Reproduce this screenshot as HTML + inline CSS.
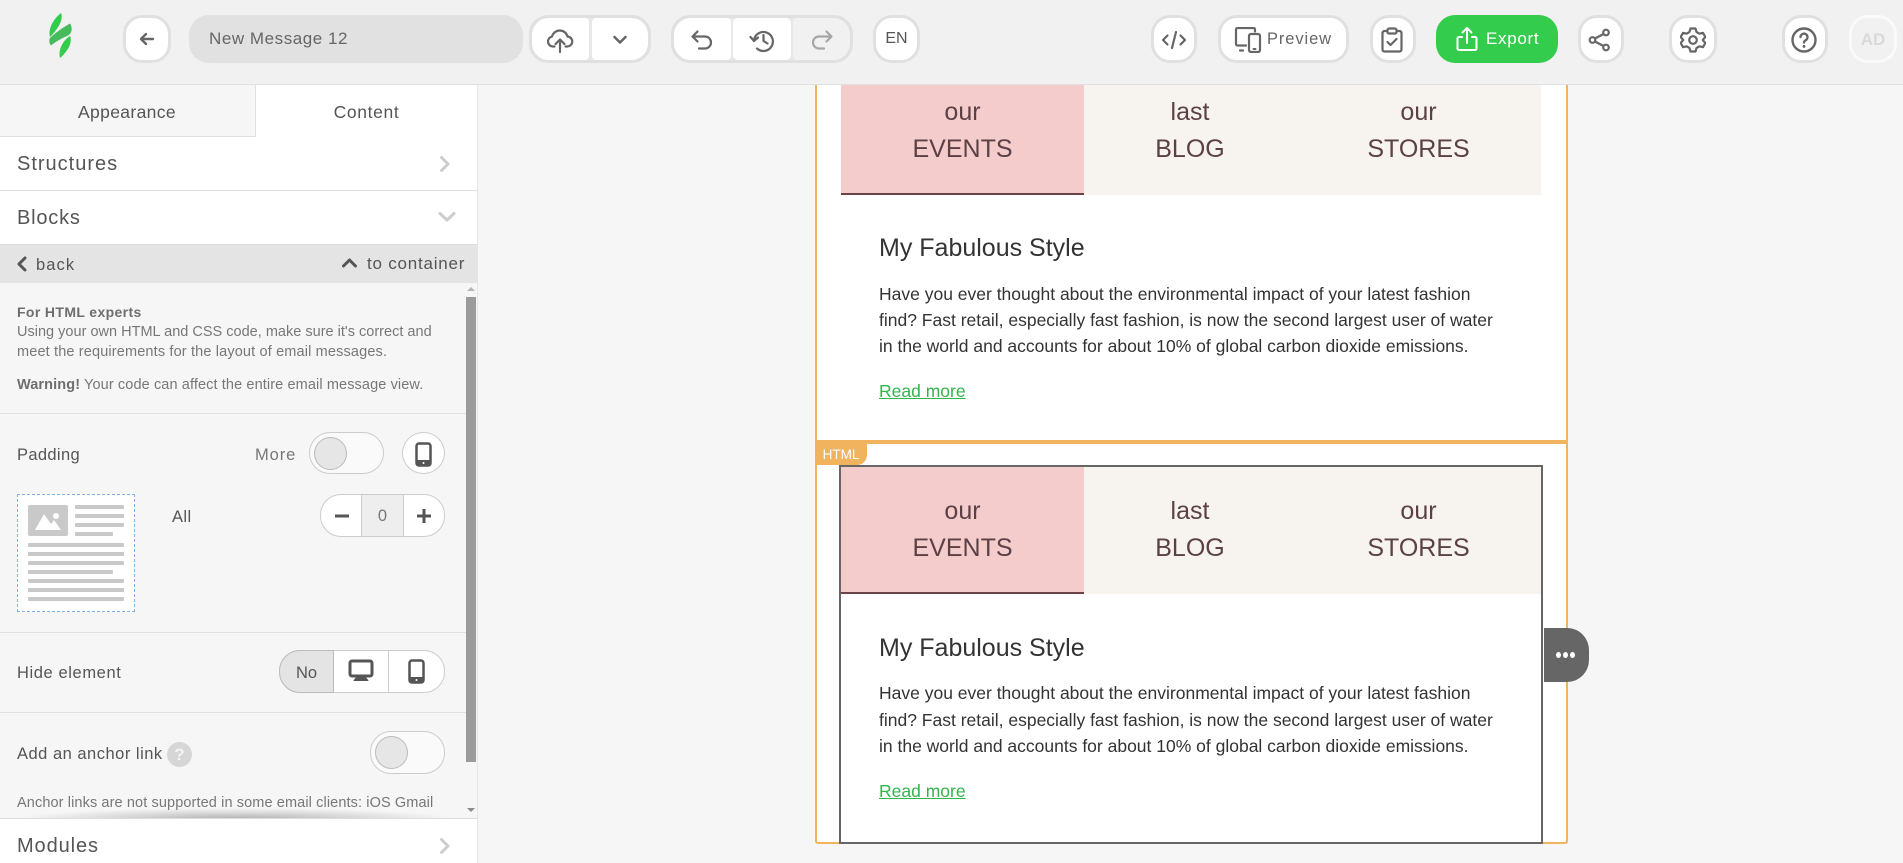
<!DOCTYPE html>
<html><head><meta charset="utf-8"><title>New Message 12</title>
<style>
html,body{margin:0;padding:0;width:1903px;height:863px;overflow:hidden;background:#f6f6f6;font-family:"Liberation Sans",sans-serif}
div,span,a,svg{position:absolute;box-sizing:border-box}
.t{white-space:nowrap;line-height:20px;height:20px;color:#555}
.c{text-align:center}
.btn{top:15px;height:48px;background:#fff;border:3px solid #e0e0e0;border-radius:19px}
.inner{top:18px;height:42px;background:#fff;border-radius:5px}
.hr{left:0;height:1px;background:#e0e0e0;width:466px}
svg{fill:none;stroke:#666;stroke-width:2;stroke-linecap:round;stroke-linejoin:round}
.ch{stroke:#ccc;stroke-width:3}
.m{color:#5b4045;font-size:25px;line-height:36px;height:36px;white-space:nowrap;text-align:center}
.h{color:#333;font-size:25px;line-height:30px;height:30px;left:879px;white-space:nowrap}
.b{color:#333;font-size:17.5px;line-height:26px;height:26px;left:879px;white-space:nowrap}
.r{color:#33b44f;font-size:17.5px;line-height:20px;height:20px;left:879px;text-decoration:underline;white-space:nowrap}
.ln{background:#c9c9c9;height:4px;border-radius:1px}
</style></head><body>

<!-- header -->
<div style="left:0;top:0;width:1903px;height:85px;background:#f1f1f1;border-bottom:1px solid #e0e0e0"></div>
<svg style="left:40px;top:5px;stroke:none" width="40" height="60" viewBox="0 0 40 60"><path style="stroke:none;fill:#33cc4d" d="M21 8C24 15 17 25 10 32C8 25 12 15 21 8Z"/><path style="stroke:none;fill:#45bb5c" d="M10 33C16 27 24 22 30 18.500C33 23 32 29 27 31C22 33 15 37 11 40.500C9 38 9 35 10 33Z"/><path style="stroke:none;fill:#33cc4d" d="M30 31C33 38 27 47 20 53C18 46 22 36 30 31Z"/></svg>

<div class="btn" style="left:123px;width:48px"></div>
<svg style="left:137px;top:29px" width="20" height="20" viewBox="0 0 20 20"><path d="M16 10H4M9 5l-5 5 5 5" style="stroke-width:2.400"/></svg>

<div style="left:189px;top:15px;width:334px;height:48px;background:#e1e1e1;border-radius:20px"></div>
<div class="t" style="left:209px;top:29px;font-size:17px;letter-spacing:.55px;color:#666">New Message 12</div>

<div class="btn" style="left:529px;width:122px;background:#e8e8e8"></div>
<div class="inner" style="left:532px;width:57px;border-radius:17px 4px 4px 17px"></div>
<div class="inner" style="left:592px;width:56px;border-radius:4px 17px 17px 4px"></div>
<svg style="left:546px;top:26px" width="28" height="28" viewBox="0 0 28 28"><path d="M8.500 20.500H7A5 5 0 0 1 6 10.600 8 8 0 0 1 21.500 10.500 5 5 0 0 1 21 20.500h-1.500M14 26V13.500M9.500 18l4.500-4.500 4.500 4.500" style="stroke-width:2.200"/></svg>
<svg style="left:612px;top:33px" width="16" height="14" viewBox="0 0 16 14"><path d="M2.500 4 8 9.500 13.500 4" style="stroke-width:2.500"/></svg>

<div class="btn" style="left:671px;width:182px;background:#e8e8e8"></div>
<div class="inner" style="left:674px;width:57px;border-radius:17px 4px 4px 17px"></div>
<div class="inner" style="left:733px;width:58px"></div>
<div class="inner" style="left:793px;width:57px;border-radius:4px 17px 17px 4px;background:#f1f1f1"></div>
<svg style="left:690px;top:29px" width="24" height="22" viewBox="0 0 24 22"><path d="M7.500 2.500 2.500 7.500 7.500 12.500M3 7.500H15A6 6 0 0 1 15 19.500H9" style="stroke-width:2.200"/></svg>
<svg style="left:749px;top:27px" width="26" height="26" viewBox="0 0 26 26"><path d="M5 13A9.500 9.500 0 1 1 8 21.500M1.500 10 5 14 9 10.500M14.500 8V14L18.500 16.500" style="stroke-width:2.200"/></svg>
<svg style="left:810px;top:29px;stroke:#a6a6a6" width="24" height="22" viewBox="0 0 24 22"><path d="M16.500 2.500 21.500 7.500 16.500 12.500M21 7.500H9A6 6 0 0 0 9 19.500H14" style="stroke:#a6a6a6;stroke-width:2.200"/></svg>

<div class="btn" style="left:873px;width:47px"></div>
<div class="t c" style="left:873px;top:29px;width:47px;font-size:16px;color:#555">EN</div>

<div class="btn" style="left:1151px;width:46px"></div>
<svg style="left:1161px;top:29px" width="26" height="22" viewBox="0 0 26 22"><path d="M6.500 6.500 2 11l4.500 4.500M19.500 6.500 24 11l-4.500 4.500M15 3 11 19" style="stroke-width:2.200"/></svg>

<div class="btn" style="left:1218px;width:131px"></div>
<svg style="left:1234px;top:27px" width="28" height="26" viewBox="0 0 28 26"><path d="M21 4.500V2.500A1.500 1.500 0 0 0 19.500 1H3.500A1.500 1.500 0 0 0 2 2.500V17A1.500 1.500 0 0 0 3.500 18.500H12M6 23.500H9" style="stroke-width:2.200"/><rect x="15" y="7" width="11" height="18" rx="2" style="position:static;stroke-width:2.200"/><path d="M19.500 22H21.500"/></svg>
<div class="t" style="left:1267px;top:29px;font-size:16.500px;color:#666;letter-spacing:.9px">Preview</div>

<div class="btn" style="left:1370px;width:46px"></div>
<svg style="left:1381px;top:27px" width="22" height="26" viewBox="0 0 22 26"><path d="M6.500 4H3.500A2 2 0 0 0 1.500 6V22.500A2 2 0 0 0 3.500 24.500H18.500A2 2 0 0 0 20.500 22.500V6A2 2 0 0 0 18.500 4H15.500M8 1.500H14A1.500 1.500 0 0 1 15.500 3V5A1.500 1.500 0 0 1 14 6.500H8A1.500 1.500 0 0 1 6.500 5V3A1.500 1.500 0 0 1 8 1.500ZM6.500 15 9.500 18 15.500 12" style="stroke-width:2.200"/></svg>

<div style="left:1436px;top:15px;width:122px;height:48px;background:#33cc4d;border-radius:19px"></div>
<svg style="left:1455px;top:26px" width="24" height="26" viewBox="0 0 24 26"><path style="stroke:#fff;stroke-width:2" d="M7 11H4A1.500 1.500 0 0 0 2.500 12.500V22.500A1.500 1.500 0 0 0 4 24H20A1.500 1.500 0 0 0 21.500 22.500V12.500A1.500 1.500 0 0 0 20 11H17M12 17V2M7.500 6.500 12 2 16.500 6.500"/></svg>
<div class="t" style="left:1486px;top:29px;font-size:17px;color:#fff;letter-spacing:.7px">Export</div>

<div class="btn" style="left:1578px;width:46px"></div>
<svg style="left:1588px;top:28px" width="24" height="24" viewBox="0 0 24 24"><circle cx="18" cy="4.500" r="2.800" style="position:static;stroke-width:2.200"/><circle cx="4.500" cy="12" r="2.800" style="position:static;stroke-width:2.200"/><circle cx="18" cy="19.500" r="2.800" style="position:static;stroke-width:2.200"/><path d="M7 10.500 15.500 6M7 13.500 15.500 18" style="stroke-width:2.200"/></svg>

<div class="btn" style="left:1669px;width:48px"></div>
<svg style="left:1680px;top:27px" width="26" height="26" viewBox="0 0 26 26"><path d="M10.500 1.500H15.500L16.500 5 19.500 6.700 23 5.800 25.300 10 22.800 13 25.300 16 23 20.200 19.500 19.300 16.500 21 15.500 24.500H10.500L9.500 21 6.500 19.300 3 20.200 .7 16 3.200 13 .7 10 3 5.800 6.500 6.700 9.500 5Z" style="stroke-width:2.200"/><circle cx="13" cy="13" r="3.800" style="position:static;stroke-width:2.200"/></svg>

<div class="btn" style="left:1782px;width:46px"></div>
<svg style="left:1791px;top:27px" width="26" height="26" viewBox="0 0 26 26"><circle cx="13" cy="13" r="11.500" style="position:static;stroke-width:2.400"/><path d="M9.500 10A3.500 3.500 0 1 1 14.500 13.300C13.500 14 13 14.500 13 15.500" style="stroke-width:2.400"/><path d="M13 19.300V19.500" style="stroke-width:2.800"/></svg>

<div class="btn" style="left:1849px;width:48px;border-color:#fafafa;background:#f1f1f1"></div>
<div class="t c" style="left:1849px;top:30px;width:48px;font-size:17px;font-weight:bold;color:#d9d9d9">AD</div>

<!-- sidebar -->
<div style="left:0;top:85px;width:478px;height:778px;background:#fff;border-right:1px solid #e6e6e6"></div>
<div style="left:0;top:85px;width:256px;height:52px;background:#f6f6f6;border-right:1px solid #e0e0e0;border-bottom:1px solid #e0e0e0"></div>
<div class="t c" style="left:0;top:102px;width:254px;font-size:17.500px;color:#555;letter-spacing:.36px">Appearance</div>
<div class="t c" style="left:256px;top:102px;width:221px;font-size:17.500px;color:#555;letter-spacing:.64px">Content</div>

<div class="t" style="left:17px;top:154px;font-size:20px;color:#555;letter-spacing:1px">Structures</div>
<svg class="ch" style="left:438px;top:155px" width="14" height="18" viewBox="0 0 14 18"><path d="M3.500 2.500 10 9l-6.500 6.500" style="stroke:#ccc;stroke-width:3"/></svg>
<div class="hr" style="top:190px;width:477px"></div>
<div class="t" style="left:17px;top:208px;font-size:20px;color:#555;letter-spacing:.8px">Blocks</div>
<svg style="left:437px;top:210px" width="20" height="14" viewBox="0 0 20 14"><path d="M3 3.500 10 10l7-6.500" style="stroke:#ccc;stroke-width:3"/></svg>

<div style="left:0;top:244px;width:477px;height:39px;background:#e4e4e4;border-top:1px solid #ddd"></div>
<svg style="left:16px;top:256px" width="12" height="16" viewBox="0 0 12 16"><path d="M9 2 3 8l6 6" style="stroke:#555;stroke-width:3"/></svg>
<div class="t" style="left:36px;top:255px;font-size:16.500px;letter-spacing:1.100px">back</div>
<svg style="left:341px;top:257px" width="17" height="12" viewBox="0 0 17 12"><path d="M2.500 9 8.500 3l6 6" style="stroke:#555;stroke-width:3"/></svg>
<div class="t" style="left:367px;top:254px;font-size:17px;letter-spacing:.78px">to container</div>

<div style="left:0;top:283px;width:477px;height:536px;background:#f6f6f6"></div>
<div style="left:466px;top:297px;width:10px;height:465px;background:#9b9b9b"></div>
<svg style="left:466px;top:286px;stroke:none" width="10" height="8"><path d="M5 1 9 5H1Z" style="fill:#b5b5b5;stroke:none"/></svg>
<svg style="left:466px;top:806px;stroke:none" width="10" height="8"><path d="M5 6 9 2H1Z" style="fill:#8a8a8a;stroke:none"/></svg>

<div class="t" style="left:17px;top:302px;font-size:14px;font-weight:bold;color:#6e6e6e;letter-spacing:.37px">For HTML experts</div>
<div class="t" style="left:17px;top:322px;font-size:14.500px;color:#777;letter-spacing:.01px">Using your own HTML and CSS code, make sure it's correct and</div>
<div class="t" style="left:17px;top:342px;font-size:14.500px;color:#777;letter-spacing:.15px">meet the requirements for the layout of email messages.</div>
<div class="t" style="left:17px;top:375px;font-size:14.500px;color:#777;letter-spacing:.11px"><b style="color:#6e6e6e">Warning!</b> Your code can affect the entire email message view.</div>
<div class="hr" style="top:413px"></div>

<div class="t" style="left:17px;top:445px;font-size:16.500px;letter-spacing:.35px">Padding</div>
<div class="t" style="left:255px;top:445px;font-size:16.500px;color:#777;letter-spacing:.9px">More</div>
<div style="left:309px;top:432px;width:75px;height:42px;border:1px solid #ccc;border-radius:21px;background:#fafafa"></div>
<div style="left:314px;top:437px;width:33px;height:33px;border:1px solid #bbb;border-radius:50%;background:#e6e6e6"></div>
<div style="left:402px;top:432px;width:43px;height:42px;border:1px solid #ccc;border-radius:50%;background:#fff"></div>
<svg style="left:415px;top:442px" width="17" height="25" viewBox="0 0 17 25"><rect x="1.500" y="1.500" width="14" height="22" rx="2.500" style="position:static;stroke:#555;stroke-width:2.500"/><path d="M1.500 19H15.500V21.500A2 2 0 0 1 13.500 23.500H3.500A2 2 0 0 1 1.500 21.500Z" style="fill:#555;stroke:#555"/><circle cx="8.500" cy="21" r="1" style="position:static;fill:#fff;stroke:none"/></svg>

<div style="left:17px;top:494px;width:118px;height:118px;background:#fff;border:1px dashed #7fb2e6"></div>
<div style="left:28px;top:505px;width:40px;height:31px;background:#c9c9c9;border-radius:2px"></div>
<svg style="left:28px;top:505px;stroke:none" width="40" height="31" viewBox="0 0 40 31"><path d="M7 25 16 9 23 19 26 15 33 25Z" style="fill:#fff;stroke:none"/><circle cx="28" cy="11" r="3" style="position:static;fill:#fff;stroke:none"/></svg>
<div class="ln" style="left:75px;top:505px;width:49px"></div>
<div class="ln" style="left:75px;top:514px;width:49px"></div>
<div class="ln" style="left:75px;top:523px;width:49px"></div>
<div class="ln" style="left:75px;top:532px;width:38px"></div>
<div class="ln" style="left:28px;top:543px;width:96px"></div>
<div class="ln" style="left:28px;top:552px;width:96px"></div>
<div class="ln" style="left:28px;top:561px;width:96px"></div>
<div class="ln" style="left:28px;top:570px;width:85px"></div>
<div class="ln" style="left:28px;top:579px;width:96px"></div>
<div class="ln" style="left:28px;top:588px;width:96px"></div>
<div class="ln" style="left:28px;top:597px;width:96px"></div>

<div class="t" style="left:172px;top:507px;font-size:16.500px;letter-spacing:.4px">All</div>
<div style="left:320px;top:494px;width:125px;height:43px;border:1px solid #ccc;border-radius:21px;background:#fff"></div>
<div style="left:361px;top:495px;width:43px;height:41px;background:#eee;border-left:1px solid #ccc;border-right:1px solid #ccc"></div>
<div class="t c" style="left:361px;top:506px;width:43px;font-size:16.500px;color:#777">0</div>
<svg style="left:332px;top:507px" width="20" height="18" viewBox="0 0 20 18"><path d="M3 9H17" style="stroke:#555;stroke-width:3;stroke-linecap:butt"/></svg>
<svg style="left:414px;top:506px" width="20" height="20" viewBox="0 0 20 20"><path d="M3 10H17M10 3V17" style="stroke:#555;stroke-width:3;stroke-linecap:butt"/></svg>
<div class="hr" style="top:632px"></div>

<div class="t" style="left:17px;top:663px;font-size:16.500px;letter-spacing:.6px">Hide element</div>
<div style="left:279px;top:650px;width:166px;height:43px;border:1px solid #ccc;border-radius:21px;background:#fff"></div>
<div style="left:279px;top:650px;width:55px;height:43px;border:1px solid #bbb;border-radius:21px 0 0 21px;background:#e4e4e4"></div>
<div style="left:388px;top:651px;width:1px;height:41px;background:#ccc"></div>
<div class="t c" style="left:279px;top:663px;width:55px;font-size:16.500px">No</div>
<svg style="left:348px;top:659px" width="26" height="24" viewBox="0 0 26 24"><rect x="2" y="2" width="22" height="15" rx="2" style="position:static;stroke:#555;stroke-width:3"/><path d="M8 19H18L20 21.500H6Z" style="fill:#555;stroke:#555;stroke-width:1"/></svg>
<svg style="left:408px;top:659px" width="17" height="25" viewBox="0 0 17 25"><rect x="1.500" y="1.500" width="14" height="22" rx="2.500" style="position:static;stroke:#555;stroke-width:2.500"/><path d="M1.500 19H15.500V21.500A2 2 0 0 1 13.500 23.500H3.500A2 2 0 0 1 1.500 21.500Z" style="fill:#555;stroke:#555"/><circle cx="8.500" cy="21" r="1" style="position:static;fill:#fff;stroke:none"/></svg>
<div class="hr" style="top:712px"></div>

<div class="t" style="left:17px;top:744px;font-size:16.500px;letter-spacing:.5px">Add an anchor link</div>
<div class="c" style="left:167px;top:742px;width:25px;height:25px;border-radius:50%;background:#d6d6d6;color:#f3f3f3;font-weight:bold;font-size:17px;line-height:25px">?</div>
<div style="left:370px;top:731px;width:75px;height:43px;border:1px solid #ccc;border-radius:21px;background:#fafafa"></div>
<div style="left:375px;top:736px;width:33px;height:33px;border:1px solid #bbb;border-radius:50%;background:#e6e6e6"></div>
<div class="t" style="left:17px;top:793px;font-size:14.500px;color:#777;letter-spacing:.11px">Anchor links are not supported in some email clients: iOS Gmail</div>
<div style="left:20px;top:808px;width:430px;height:11px;background:radial-gradient(ellipse at 50% 100%,rgba(120,120,120,.55) 0,rgba(150,150,150,.2) 50%,rgba(246,246,246,0) 72%)"></div>
<div style="left:0;top:818px;width:477px;height:1px;background:#ddd"></div>
<div class="t" style="left:17px;top:836px;font-size:20px;color:#555;letter-spacing:.9px">Modules</div>
<svg style="left:438px;top:837px" width="14" height="18" viewBox="0 0 14 18"><path d="M3.500 2.500 10 9l-6.500 6.500" style="stroke:#ccc;stroke-width:3"/></svg>

<!-- canvas -->
<div style="left:815px;top:85px;width:753px;height:759px;background:#fff;border:2px solid #f2b35e;border-top:none;border-radius:0 0 3px 3px"></div>
<div style="left:841px;top:85px;width:243px;height:110px;background:#f4cccc;border-bottom:2px solid #6b4248"></div>
<div style="left:1084px;top:85px;width:457px;height:110px;background:#f7f3ee"></div>
<div class="m" style="left:841px;top:94px;width:243px">our</div>
<div class="m" style="left:841px;top:131px;width:243px">EVENTS</div>
<div class="m" style="left:1084px;top:94px;width:212px">last</div>
<div class="m" style="left:1084px;top:131px;width:212px">BLOG</div>
<div class="m" style="left:1296px;top:94px;width:245px">our</div>
<div class="m" style="left:1296px;top:131px;width:245px">STORES</div>
<div class="h" style="top:233px">My Fabulous Style</div>
<div class="b" style="top:281px">Have you ever thought about the environmental impact of your latest fashion</div>
<div class="b" style="top:307px">find? Fast retail, especially fast fashion, is now the second largest user of water</div>
<div class="b" style="top:333px">in the world and accounts for about 10% of global carbon dioxide emissions.</div>
<div class="r" style="top:381px">Read more</div>

<div style="left:815px;top:440px;width:753px;height:4px;background:#f2b35e"></div>

<div style="left:839px;top:465px;width:704px;height:379px;border:2px solid #666;background:#fff"></div>
<div style="left:841px;top:467px;width:243px;height:127px;background:#f4cccc;border-bottom:2px solid #6b4248"></div>
<div style="left:1084px;top:467px;width:457px;height:127px;background:#f7f3ee"></div>
<div class="m" style="left:841px;top:493px;width:243px">our</div>
<div class="m" style="left:841px;top:530px;width:243px">EVENTS</div>
<div class="m" style="left:1084px;top:493px;width:212px">last</div>
<div class="m" style="left:1084px;top:530px;width:212px">BLOG</div>
<div class="m" style="left:1296px;top:493px;width:245px">our</div>
<div class="m" style="left:1296px;top:530px;width:245px">STORES</div>
<div class="h" style="top:633px">My Fabulous Style</div>
<div class="b" style="top:680px">Have you ever thought about the environmental impact of your latest fashion</div>
<div class="b" style="top:707px">find? Fast retail, especially fast fashion, is now the second largest user of water</div>
<div class="b" style="top:733px">in the world and accounts for about 10% of global carbon dioxide emissions.</div>
<div class="r" style="top:781px">Read more</div>

<div class="c" style="left:815px;top:444px;width:52px;height:21px;background:#f2b35e;border-radius:0 0 10px 0;color:#fff;font-size:13.500px;line-height:21px">HTML</div>
<div style="left:1544px;top:628px;width:45px;height:54px;background:#666;border-radius:0 22px 22px 0"></div>
<div style="left:1556px;top:652px;width:5px;height:6px;background:#fff;border-radius:50%"></div>
<div style="left:1563px;top:652px;width:5px;height:6px;background:#fff;border-radius:50%"></div>
<div style="left:1570px;top:652px;width:5px;height:6px;background:#fff;border-radius:50%"></div>
</body></html>
